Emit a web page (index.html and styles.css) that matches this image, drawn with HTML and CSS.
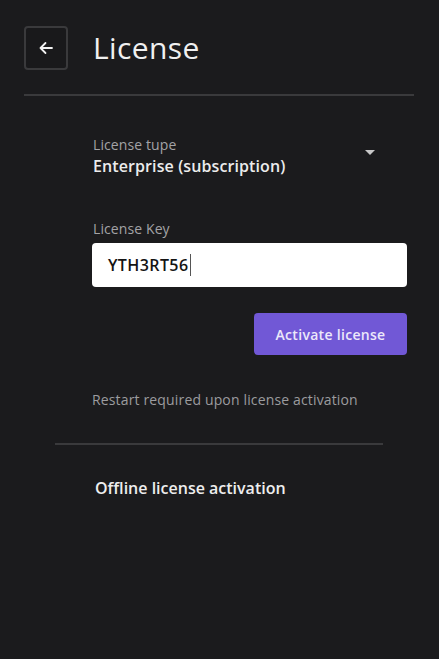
FILE: index.html
```html
<!DOCTYPE html>
<html lang="en">
<head>
<meta charset="utf-8">
<title>License</title>
<link rel="stylesheet" href="styles.css">
</head>
<body>
<div class="page">
  <header class="header">
    <button class="back" aria-label="Back">
      <svg width="18" height="18" viewBox="0 0 18 18" fill="none" stroke="#f2f2f2" stroke-width="1.8" stroke-linecap="round" stroke-linejoin="round"><path d="M15 9H3.5M8.5 4L3.5 9l5 5"/></svg>
    </button>
    <h1 class="title">License</h1>
  </header>
  <hr class="divider">
  <main class="form">
    <div class="select">
      <div class="select-text">
        <div class="label">License tupe</div>
        <div class="value">Enterprise (subscription)</div>
      </div>
      <span class="caret-down"></span>
    </div>
    <div class="field">
      <div class="label">License Key</div>
      <div class="input"><span class="input-text">YTH3RT56</span><span class="cursor"></span></div>
    </div>
    <div class="actions">
      <button class="primary">Activate license</button>
    </div>
    <p class="note">Restart required upon license activation</p>
  </main>
  <hr class="divider small">
  <div class="offline">Offline license activation</div>
</div>
</body>
</html>
```

FILE: styles.css
```css
html, body {
  margin: 0;
  padding: 0;
  background: #1b1b1d;
}
body {
  font-family: "Open Sans", "Noto Sans", sans-serif;
  color: #ececec;
  width: 439px;
  height: 659px;
  overflow: hidden;
}
.page {
  padding-top: 26px;
}
.header {
  display: flex;
  align-items: center;
  gap: 25px;
  padding: 0 24px;
}
.back {
  box-sizing: border-box;
  width: 44px;
  height: 44px;
  border: 2px solid #3a3a3c;
  border-radius: 4px;
  background: #19191b;
  display: flex;
  align-items: center;
  justify-content: center;
  padding: 0;
}
.title {
  margin: 0;
  font-size: 30px;
  font-weight: 400;
  line-height: 44px;
  color: #f0f0f0;
  letter-spacing: 0.4px;
}
.divider {
  border: 0;
  height: 2px;
  background: #3a3a3c;
  margin: 24px 25px 0 24px;
}
.divider.small {
  margin: 34px 56px 0 55px;
}
.form {
  margin: 40px 32px 0 93px;
}
.select {
  display: flex;
  align-items: center;
  justify-content: space-between;
}
.label {
  font-size: 14px;
  line-height: 18px;
  color: #a3a3a6;
  letter-spacing: 0.1px;
}
.value {
  font-size: 16px;
  line-height: 24px;
  color: #ececec;
  font-weight: 600;
  letter-spacing: 0.1px;
}
.caret-down {
  width: 0;
  height: 0;
  border-left: 5px solid transparent;
  border-right: 5px solid transparent;
  border-top: 5px solid #c8c8c8;
  margin-right: 32px;
  margin-bottom: 10px;
}
.field {
  margin-top: 42px;
}
.input {
  margin-top: 5px;
  margin-left: -1px;
  height: 44px;
  background: #ffffff;
  border-radius: 4px;
  display: flex;
  align-items: center;
  padding-left: 16px;
}
.input-text {
  font-size: 16px;
  font-weight: 600;
  color: #141414;
  letter-spacing: 0.4px;
}
.cursor {
  width: 1px;
  height: 22px;
  background: #555;
  margin-left: 2px;
}
.actions {
  display: flex;
  justify-content: flex-end;
  margin-top: 26px;
}
.primary {
  width: 153px;
  height: 42px;
  border: 0;
  border-radius: 4px;
  background: #7158d6;
  color: #ece8fa;
  font-family: inherit;
  font-size: 14px;
  font-weight: 600;
  letter-spacing: 0.3px;
}
.note {
  margin: 36px 0 0 -1px;
  font-size: 14px;
  line-height: 18px;
  color: #9c9c9f;
  letter-spacing: 0.15px;
}
.offline {
  margin: 32px 0 0 95px;
  font-size: 16px;
  line-height: 22px;
  font-weight: 600;
  color: #eeeeee;
}
```
